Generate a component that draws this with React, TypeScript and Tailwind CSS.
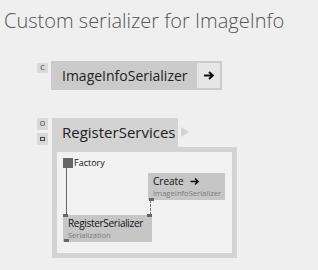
import React from 'react';

const font = { fontFamily: '"Open Sans", "Noto Sans", sans-serif' };

const Pin = ({ className }: { className: string }) => (
  <div className={`absolute w-[5px] h-[3px] bg-[#666] ${className}`}></div>
);

const App = () => {
  return (
    <div className="w-[318px] h-[270px] bg-[#efefef] overflow-hidden font-['Open_Sans',sans-serif]">
      <h1 className="pl-[4px] pt-[7px] text-[20px] font-light text-[#555] leading-[28px]">
        Custom serializer for ImageInfo
      </h1>

      {/* class node */}
      <div className="flex items-start mt-[26px] ml-[37px]">
        <div className="w-[11px] h-[10px] mt-[2px] bg-[#d9d9d9] text-[7px] leading-[10px] text-center text-[#333]">C</div>
        <div className="ml-[3px] w-[171px] h-[29px] bg-[#cbcbcb] flex items-center justify-between pl-[11px] pr-[2px]">
          <span className="text-[14px] text-[#222]">ImageInfoSerializer</span>
          <div className="w-[23px] h-[25px] bg-[#e6e6e6] flex items-center justify-center">
            <svg width="12" height="11" viewBox="0 0 12 11">
              <path d="M1 5.5h8.5M6 2l3.8 3.5L6 9" stroke="#111" strokeWidth="2" fill="none" />
            </svg>
          </div>
        </div>
      </div>

      {/* method group */}
      <div className="flex items-start mt-[28px] ml-[37px]">
        <div className="flex flex-col gap-[3px]">
          <div className="w-[11px] h-[12px] bg-[#d9d9d9] text-[7px] leading-[12px] text-center text-[#333]">O</div>
          <div className="w-[11px] h-[12px] bg-[#d9d9d9] flex items-center justify-center">
            <div className="w-[5px] h-[4px] border border-[#444]"></div>
          </div>
        </div>
        <div className="ml-[4px] flex flex-col">
          <div className="flex items-start">
            <div className="w-[126px] h-[29px] bg-[#d3d3d3] pl-[10px] pt-[4px] text-[15px] leading-[20px] text-[#222]">RegisterServices</div>
            <svg className="ml-[3px] mt-[9px]" width="8" height="10" viewBox="0 0 8 10">
              <path d="M0 0L8 5L0 10Z" fill="#d3d3d3" />
            </svg>
          </div>
          <div className="w-[185px] h-[111px] border-[5px] border-[#d3d3d3] bg-[#f1f1f1] relative" style={font}>
            <div className="absolute left-[6px] top-[6px] w-[10px] h-[10px] bg-[#666]"></div>
            <span className="absolute left-[17px] top-[5px] text-[9px] leading-[12px] text-[#111]">Factory</span>
            <div className="absolute left-[9px] top-[16px] w-[1px] h-[47px] bg-[#666]"></div>
            <div className="absolute left-[93px] top-[48px] h-[15px] border-l border-dashed border-[#777]"></div>

            <div className="absolute left-[91px] top-[21px] w-[77px] h-[27px] bg-[#c6c6c6] pl-[5px] pt-[2px]">
              <div className="flex items-center gap-[6px] text-[10px] leading-[13px] text-[#111]">
                Create
                <svg width="10" height="9" viewBox="0 0 10 9">
                  <path d="M0.5 4.5h7.5M5 1.5l3 3-3 3" stroke="#111" strokeWidth="1.6" fill="none" />
                </svg>
              </div>
              <div className="text-[7.6px] leading-[10px] text-[#7a7a7a]">ImageInfoSerializer</div>
              <Pin className="left-[1px] bottom-[-1px]" />
            </div>

            <div className="absolute left-[6px] top-[63px] w-[89px] h-[27px] bg-[#c6c6c6] pl-[5px] pt-[2px]">
              <div className="text-[10px] leading-[13px] tracking-[-0.3px] text-[#111]">RegisterSerializer</div>
              <div className="text-[7.5px] leading-[10px] text-[#7a7a7a]">Serialization</div>
              <Pin className="left-0 top-[-1px]" />
              <Pin className="right-0 top-[-1px]" />
              <Pin className="left-[1px] bottom-0" />
            </div>
          </div>
        </div>
      </div>
    </div>
  );
};

export default App;
